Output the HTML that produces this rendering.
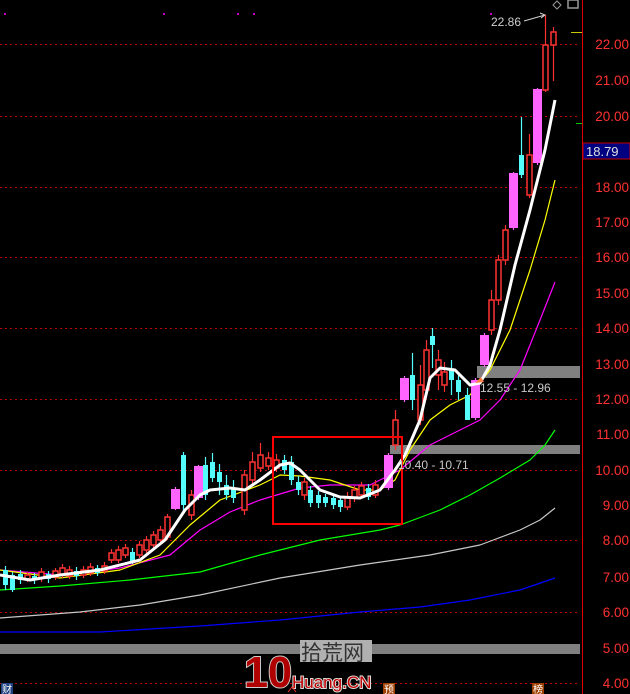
<!DOCTYPE html>
<html><head><meta charset="utf-8"><style>
html,body{margin:0;padding:0;background:#000;width:630px;height:694px;overflow:hidden}
svg{display:block}
text{font-family:"Liberation Sans","Noto Sans CJK SC",sans-serif}
</style></head><body>
<svg id="s" width="630" height="694" viewBox="0 0 630 694" xmlns="http://www.w3.org/2000/svg">
<rect width="630" height="694" fill="#000"/>
<g stroke="#c00000" stroke-width="1" stroke-dasharray="2,3">
<line x1="0" y1="44.5" x2="580" y2="44.5"/><line x1="0" y1="116.5" x2="580" y2="116.5"/>
<line x1="0" y1="187.5" x2="580" y2="187.5"/><line x1="0" y1="257.5" x2="580" y2="257.5"/>
<line x1="0" y1="328.5" x2="580" y2="328.5"/><line x1="0" y1="399.5" x2="580" y2="399.5"/>
<line x1="0" y1="470.5" x2="580" y2="470.5"/><line x1="0" y1="540.5" x2="580" y2="540.5"/>
<line x1="0" y1="612.5" x2="580" y2="612.5"/><line x1="0" y1="683.5" x2="580" y2="683.5"/>
</g>
<rect x="477" y="366" width="103" height="12" fill="#808080"/>
<rect x="390" y="445" width="190" height="9" fill="#808080"/>
<rect x="0" y="644" width="580" height="10" fill="#808080"/>
<g id="ma" fill="none" stroke-linejoin="round">
<polyline stroke="#0000ff" stroke-width="1.2" points="0,632 100,632 200,626 280,620 360,612 420,607 470,600 520,590 555,578"/>
<polyline stroke="#c8c8c8" stroke-width="1.2" points="0,618 80,612 140,605 200,595 280,578 360,565 430,555 480,545 520,530 540,520 555,508"/>
<polyline stroke="#00ff00" stroke-width="1.2" points="0,590 60,586 130,580 200,572 260,555 320,540 380,530 400,525 440,510 470,495 500,478 530,460 545,445 555,430"/>
<polyline stroke="#ff00ff" stroke-width="1.2" points="0,570 60,575 120,568 170,555 200,530 230,512 260,500 300,488 330,485 370,485 400,470 430,445 460,430 480,420 500,400 520,370 540,320 555,282"/>
<polyline stroke="#ffff00" stroke-width="1.2" points="0,570 60,578 120,570 160,555 190,525 220,500 260,485 280,475 300,476 330,480 360,490 380,490 395,480 410,450 430,420 450,405 470,395 490,370 510,330 530,270 545,220 555,180"/>
</g>
<g id="c"></g>
<polyline fill="none" stroke="#fff" stroke-width="3" stroke-linejoin="round" points="0,575 30,580 60,575 100,570 140,560 165,540 185,510 200,495 210,490 230,488 245,490 260,480 280,465 290,463 300,470 310,480 320,490 340,497 360,498 380,490 395,470 405,455 420,420 430,378 440,368 455,370 470,385 480,383 490,365 500,330 515,265 530,210 545,150 555,100"/>
<rect x="273" y="437" width="129" height="87" fill="none" stroke="#ff0000" stroke-width="2"/>
<text x="491" y="26" fill="#d0d0d0" font-size="12">22.86</text>
<path d="M524,21 L545,15 M540,13 L545,15 L541,18" stroke="#d0d0d0" fill="none" stroke-width="1"/>
<text x="480" y="392" fill="#c8c8c8" font-size="12">12.55 - 12.96</text>
<text x="398" y="469" fill="#c8c8c8" font-size="12">10.40 - 10.71</text>
<path d="M475,383 l6,-6 l3,5z" fill="#ff8040"/>
<line x1="582.5" y1="0" x2="582.5" y2="694" stroke="#e00000"/>
<line x1="571" y1="32.5" x2="582" y2="32.5" stroke="#c8c800"/>
<line x1="576" y1="123.5" x2="582" y2="123.5" stroke="#00c000"/>
<rect x="583" y="143" width="47" height="16" fill="#000080" stroke="#c00000"/>
<text x="586" y="156" fill="#e0e0e0" font-size="13">18.79</text>
<g fill="#ff3232" font-size="13.5" text-anchor="end">
<text x="629" y="49">22.00</text><text x="629" y="85">21.00</text><text x="629" y="121">20.00</text>
<text x="629" y="192">18.00</text><text x="629" y="227">17.00</text><text x="629" y="262">16.00</text>
<text x="629" y="298">15.00</text><text x="629" y="333">14.00</text><text x="629" y="369">13.00</text>
<text x="629" y="404">12.00</text><text x="629" y="439">11.00</text><text x="629" y="475">10.00</text>
<text x="629" y="510">9.00</text><text x="629" y="545">8.00</text><text x="629" y="582">7.00</text>
<text x="629" y="617">6.00</text><text x="629" y="653">5.00</text><text x="629" y="688">4.00</text>
</g>
<path d="M553,5 l4,-4 l4,4 l-4,4z" fill="none" stroke="#999"/>
<rect x="568" y="0" width="10" height="8" fill="none" stroke="#999" stroke-width="1.5"/>
<g fill="#c000c0"><rect x="4" y="13" width="2" height="2"/><rect x="163" y="13" width="2" height="2"/><rect x="237" y="13" width="2" height="2"/><rect x="253" y="13" width="2" height="2"/><rect x="490" y="13" width="2" height="2"/></g>
<text x="244" y="687" fill="#b00000" font-size="44" font-weight="bold" stroke="#ccc" stroke-width="2" paint-order="stroke" textLength="48" lengthAdjust="spacingAndGlyphs">10</text>
<rect x="300" y="640" width="72" height="22" fill="#b0b0b0"/>
<text x="301" y="660" fill="#333" font-size="21">拾荒网</text>
<text x="292" y="688" fill="#c00000" font-size="17" stroke="#ddd" stroke-width="2" paint-order="stroke">Huang.CN</text>
<rect x="1" y="683" width="12" height="11" fill="#204080"/><text x="2" y="693" fill="#fff" font-size="10">财</text>
<rect x="383" y="683" width="12" height="11" fill="#a04000"/><text x="384" y="693" fill="#fff" font-size="10">预</text>
<rect x="532" y="683" width="12" height="11" fill="#a04000"/><text x="533" y="693" fill="#fff" font-size="10">榜</text>
<path d="M288,692 l4,-5 l4,5" stroke="#ff3030" fill="none"/>
</svg>
<script>
var d=[
[5,570,585,566,590,'c'],[12,575,590,572,592,'c'],[20,574,580,570,584,'c'],[27,575,579,572,582,'r'],[34,576,580,573,584,'c'],
[41,572,578,568,582,'r'],[48,574,579,571,583,'c'],[55,571,577,568,580,'r'],[62,568,575,564,578,'r'],[69,570,576,566,579,'r'],
[76,571,576,567,580,'c'],[83,570,575,566,578,'r'],[90,567,573,563,576,'r'],[97,568,573,565,576,'c'],[104,566,571,562,574,'r'],
[111,553,560,549,563,'r'],[118,550,560,546,563,'r'],[125,548,555,544,558,'r'],[132,552,562,548,564,'c'],[139,545,555,541,558,'r'],
[146,540,550,536,553,'r'],[153,535,545,531,548,'r'],[160,530,540,526,543,'r'],[167,517,537,514,540,'r'],[175,489,509,487,510,'p'],
[183,455,505,452,512,'c'],[191,495,515,490,520,'r'],[198,466,498,465,500,'p'],[205,465,495,457,500,'c'],[212,462,478,453,482,'c'],
[219,472,482,464,495,'c'],[226,485,495,475,500,'c'],[233,488,498,480,503,'c'],[244,475,510,470,515,'r'],[252,462,480,452,485,'r'],
[260,455,468,443,472,'r'],[268,458,466,452,470,'r'],[276,460,468,454,472,'r'],[284,460,470,455,474,'c'],[291,462,480,456,485,'c'],
[298,482,490,476,495,'c'],[304,482,495,478,500,'r'],[310,490,503,486,507,'c'],[318,495,503,491,508,'c'],[325,497,503,494,507,'c'],
[333,498,505,494,509,'c'],[340,500,507,496,512,'c'],[347,497,507,492,510,'r'],[354,490,498,486,502,'r'],[361,486,495,482,498,'r'],
[368,488,497,484,500,'c'],[375,485,495,480,498,'r'],[388,455,488,453,490,'p'],[395,420,445,410,450,'r'],[404,378,400,376,402,'p'],
[412,375,400,353,410,'c'],[420,385,420,365,425,'r'],[426,350,390,340,395,'r'],[432,336,345,328,368,'c'],[438,360,375,350,390,'r'],
[444,372,385,362,392,'r'],[451,370,380,360,395,'c'],[458,380,392,372,400,'c'],[467,395,420,388,420,'c'],[475,380,418,378,420,'p'],
[484,335,365,333,367,'p'],[491,300,330,290,335,'r'],[498,260,300,255,305,'r'],[505,230,260,225,265,'r'],[513,173,228,172,230,'p'],
[521,155,175,117,178,'c'],[529,155,195,134,198,'r'],[537,89,163,88,165,'p'],[545,45,90,15,92,'r'],[553,32,45,27,81,'r']];
var g=document.getElementById('c'),h='';
d.forEach(function(a){var x=a[0],t=a[1],b=a[2],hi=a[3],lo=a[4],k=a[5];
var col=k=='c'?'#54fcfc':(k=='p'?'#ff64ff':'#ff3232');
h+='<line x1="'+(x+.5)+'" y1="'+hi+'" x2="'+(x+.5)+'" y2="'+lo+'" stroke="'+col+'" stroke-width="1.2"/>';
var w=k=='p'?9:5;
if(k=='r')h+='<rect x="'+(x-2)+'" y="'+t+'" width="'+w+'" height="'+(b-t)+'" fill="#000" stroke="'+col+'" stroke-width="1.5"/>';
else h+='<rect x="'+(x-w/2+.5)+'" y="'+t+'" width="'+w+'" height="'+(b-t)+'" fill="'+col+'"/>';});
g.innerHTML=h;
</script>
</body></html>
